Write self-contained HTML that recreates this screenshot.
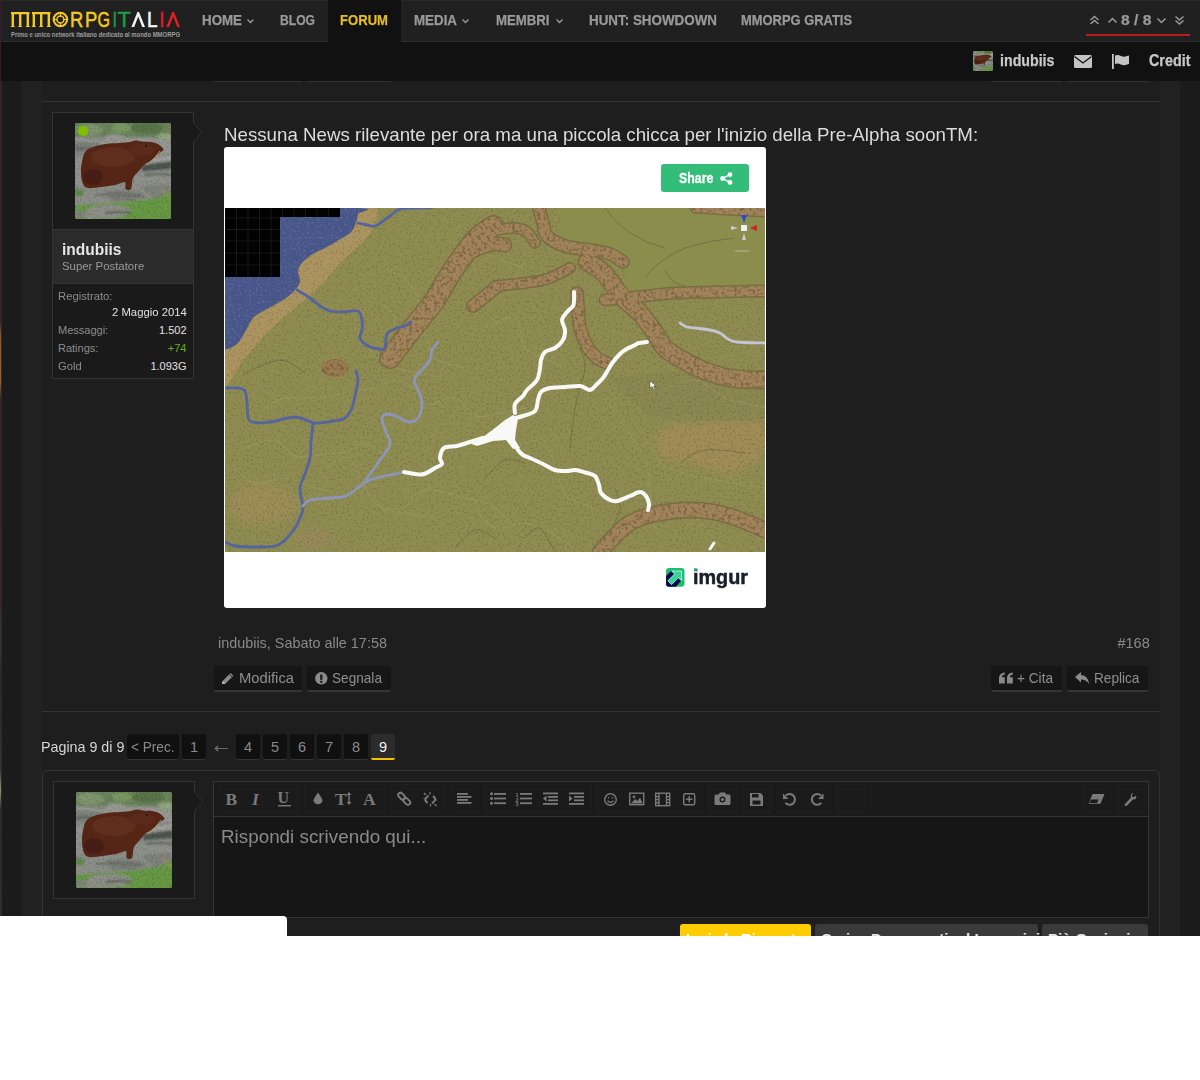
<!DOCTYPE html>
<html><head><meta charset="utf-8">
<style>
*{margin:0;padding:0;box-sizing:border-box}
html,body{width:1200px;height:1080px;background:#fff;overflow:hidden;font-family:"Liberation Sans",sans-serif}
.abs{position:absolute}
#page{position:absolute;left:0;top:0;width:1200px;height:936px;background:#1b1b1b;overflow:hidden}
#edge{left:0;top:0;width:1px;height:936px;background:linear-gradient(#3a1a2c 0,#3a1a2c 320px,#9a5020 335px,#b06024 380px,#3a1e2a 400px,#40202c 600px,#3a3040 640px,#1e2c28 680px,#2a3a2a 770px,#8a9a60 790px,#203028 810px,#283432 936px)}
#edgeline{left:1px;top:81px;width:1px;height:855px;background:#2c2c2c}
.col{background:#212121}
#nav{left:1px;top:0;width:1199px;height:42px;background:#202020;border-top:1px solid #282828;border-bottom:1px solid #2c2c2c}
#sub{left:1px;top:42px;width:1199px;height:39px;background:#111}
.nt{position:absolute;top:12px;font-weight:bold;font-size:14px;color:#9a9a9a;white-space:nowrap;letter-spacing:-0.2px}
.caret{display:inline-block;width:5px;height:5px;border-right:1.5px solid #9a9a9a;border-bottom:1.5px solid #9a9a9a;transform:rotate(45deg);margin-left:5px;position:relative;top:-3px}
#forum{left:328px;top:0;width:73px;height:42px;background:#111}
.hline{background:#333;height:1px}
.box{position:absolute;background:#1a1a1a;border:1px solid #333}
.btn{position:absolute;height:26px;background:#161616;border-radius:2px;border-bottom:2px solid #363636}
.pg{position:absolute;top:734px;height:25px;background:#101010;border-radius:2px;box-shadow:0 1px 0 #333}
.t{position:absolute;line-height:1;white-space:nowrap;transform-origin:0 0}
.nav{top:12.1px;font-size:15.2px;font-weight:bold;color:#9a9a9a;-webkit-text-stroke:0.25px #9a9a9a}
.sb{top:52.5px;font-size:16px;font-weight:bold;color:#c8c8c8;-webkit-text-stroke:0.25px #c8c8c8}
.av{background:radial-gradient(ellipse at 45% 50%,#5a3020 0 35%,transparent 36%),linear-gradient(#6a8a50,#8a9a88 40%,#8a9080 70%,#6a9a40)}
.st{font-size:11px;color:#8c8c8c}
.stv{font-size:11px;color:#e2e2e2;transform-origin:100% 0}
.bt{top:670.5px;font-size:14.8px;color:#8f8f8f}
.pt{top:739.7px;font-size:14.5px;color:#8a8a8a}
</style></head><body>
<div id="page">
  <div class="abs col" style="left:22px;top:81px;width:20px;height:855px"></div>
  <div class="abs" style="left:42px;top:81px;width:1118px;height:855px;background:#1e1e1e"></div>
  <div class="abs col" style="left:1160px;top:81px;width:20px;height:855px"></div>
  <div class="abs" id="edge"></div>
  <div class="abs" id="edgeline"></div>
  <div class="abs hline" style="left:42px;top:101px;width:1118px"></div>

  <!-- user box -->
  <div class="abs" style="left:52px;top:112px;width:142px;height:267px;background:#1a1a1a;border:1px solid #333"></div>
  <div class="abs" style="left:53px;top:229px;width:140px;height:55px;background:#2b2b2b;border-top:1px solid #333;border-bottom:1px solid #333"></div>
  <svg class="abs" style="left:192px;top:122px" width="12" height="22"><path d="M1 1 L10 10.5 L1 20" fill="#1a1a1a" stroke="#333" stroke-width="1"/><rect x="0" y="2" width="1.5" height="17" fill="#1a1a1a"/></svg>
  <div class="abs" id="av1" style="left:75px;top:123px;width:96px;height:96px"><svg width="96" height="96" viewBox="0 0 96 96" style="display:block;border-radius:2px">
    <defs><filter id="bl1"><feGaussianBlur stdDeviation="0.9"/></filter><filter id="bs1"><feGaussianBlur stdDeviation="0.45"/></filter>
    <filter id="nz1" x="0" y="0" width="100%" height="100%"><feTurbulence type="fractalNoise" baseFrequency="0.55" numOctaves="2" seed="6"/><feColorMatrix type="matrix" values="0 0 0 0 0  0 0 0 0 0  0 0 0 0 0  0 0 0 -1.8 1.0"/></filter></defs>
    <rect width="96" height="96" fill="#8a8d87"/>
    <g filter="url(#bl1)">
      <rect x="-4" y="-4" width="104" height="18" fill="#6c855c"/>
      <ellipse cx="14" cy="7" rx="14" ry="6" fill="#7f9670"/>
      <ellipse cx="46" cy="5" rx="10" ry="5" fill="#7a9a62"/>
      <ellipse cx="72" cy="5" rx="16" ry="6" fill="#5a7648"/>
      <ellipse cx="90" cy="14" rx="8" ry="4" fill="#92a682"/>
      <path d="M0 14 L28 18 L32 12 Q42 9 52 15 L72 15 L96 19 L96 30 L0 30 Z" fill="#979a94"/>
      <path d="M0 18 L26 20 L24 30 L0 30 Z" fill="#7d827a"/>
      <path d="M0 30 H96 V64 H0 Z" fill="#8a8d87"/>
      <path d="M64 36 L96 32 V38 L66 42 Z" fill="#9ea19b"/>
      <path d="M66 42 L96 38 V46 L68 49 Z" fill="#50554f"/>
      <path d="M60 50 Q80 46 96 48 V63 Q80 65 58 64 Z" fill="#90938c"/>
      <path d="M0 34 L9 34 L8 62 L0 64 Z" fill="#92958f"/>
      <rect x="-4" y="68" width="104" height="32" fill="#689a44"/>
      <path d="M0 68 Q20 63 50 63 Q72 65 94 64 L90 72 Q62 80 30 80 L0 83 Z" fill="#8e918a"/>
      <path d="M30 68 Q50 66 68 70 L60 78 L36 78 Z" fill="#7c7f78"/>
      <path d="M66 64 Q84 60 96 62 L94 70 L78 76 Z" fill="#80847c"/>
      <path d="M12 86 Q25 80 42 82 Q55 84 57 88 L48 94 L20 96 L10 96 Z" fill="#8f9189"/>
      <path d="M0 88 L12 88 L8 96 L0 96 Z" fill="#80857a"/>
      <path d="M0 26 Q14 24 28 28" stroke="#5c605a" stroke-width="2" fill="none"/>
      <path d="M70 52 Q84 50 96 52" stroke="#5e625c" stroke-width="2" fill="none"/>
      <path d="M20 72 Q45 70 70 74" stroke="#6a6e68" stroke-width="2.2" fill="none"/>
      <path d="M30 90 Q45 88 56 90" stroke="#5a5e58" stroke-width="2" fill="none"/>
      <path d="M0 66 L10 68 L6 74 L0 72 Z" fill="#5f8a48"/>
      <path d="M86 66 Q92 70 96 76" stroke="#b09a58" stroke-width="1.2" fill="none"/>
    </g>
    <rect width="96" height="96" filter="url(#nz1)" opacity="0.25"/>
    <g filter="url(#bs1)">
      <path d="M6 45 C6.3 43.2 7.2 36.8 8 34 C8.8 31.2 9.3 29.7 11 28 C12.7 26.3 14.7 25.2 18 24 C21.3 22.8 26.7 21.7 31 21 C35.3 20.3 40.0 20.3 44 20 C48.0 19.7 52.3 19.4 55 19 C57.7 18.6 57.9 17.6 60 17.5 C62.1 17.4 64.9 18.2 67.5 18.5 C70.1 18.8 73.0 18.6 75.5 19 C78.0 19.4 80.8 20.1 82.7 21 C84.6 21.9 86.0 23.4 87 24.4 C88.0 25.4 88.8 26.1 88.5 27 C88.2 27.9 86.4 28.3 85 29.5 C83.6 30.7 81.6 32.6 80 34 C78.4 35.4 77.3 36.7 75.5 38 C73.7 39.3 70.9 40.3 69 42 C67.1 43.7 65.8 45.8 64 48 C62.2 50.2 59.3 52.0 58 55 C56.7 58.0 57.2 64.2 56 66 C54.8 67.8 51.6 67.2 50.6 66 C49.6 64.8 51.6 59.7 49.8 59 C48.0 58.3 43.9 61.2 40 62 C36.1 62.8 31.1 63.5 26.7 64 C22.2 64.5 16.4 65.5 13.3 65 C10.2 64.5 9.2 63.2 8 61 C6.8 58.8 6.3 53.5 6 52 Z" fill="#542718"/>
      <ellipse cx="38" cy="34" rx="22" ry="10" fill="#5f2e1c"/>
      <ellipse cx="66" cy="27" rx="13" ry="6" fill="#5c2b1a"/>
      <ellipse cx="18" cy="54" rx="10" ry="8" fill="#451f12"/>
      <path d="M85 28 Q80 36 72 42" stroke="#a89868" stroke-width="1" fill="none"/>
      <circle cx="71" cy="23" r="1" fill="#2a1208"/>
    </g>
  </svg></div>
  <div class="abs" style="left:78px;top:126px;width:10px;height:10px;border-radius:50%;background:#7fbf00"></div>
  <div class="t" style="left:62px;top:241.5px;font-size:16px;font-weight:bold;color:#e6e6e6;transform:scaleX(0.969)">indubiis</div>
  <div class="t" style="left:62px;top:260.7px;font-size:11.5px;color:#9a9a9a;transform:scaleX(0.99)">Super Postatore</div>
  <div class="t st" style="left:58px;top:290.5px;transform:scaleX(1.024)">Registrato:</div>
  <div class="t stv" style="right:1013.5px;top:306.9px;transform:scaleX(1.027)">2 Maggio 2014</div>
  <div class="t st" style="left:58px;top:324.6px">Messaggi:</div>
  <div class="t stv" style="right:1013.5px;top:324.6px">1.502</div>
  <div class="t st" style="left:58px;top:343px">Ratings:</div>
  <div class="t stv" style="right:1013.5px;top:343px;color:#66aa22">+74</div>
  <div class="t st" style="left:58px;top:360.8px;transform:scaleX(1.019)">Gold</div>
  <div class="t stv" style="right:1013.5px;top:360.8px">1.093G</div>

  <!-- message -->
  <div class="t" style="left:223.8px;top:126.1px;font-size:18.5px;color:#dcdcdc;transform:scaleX(1.011)">Nessuna News rilevante per ora ma una piccola chicca per l'inizio della Pre-Alpha soonTM:</div>
  <div class="abs" style="left:224px;top:147px;width:542px;height:461px;background:#fff;border-radius:3px"></div>
  <div class="abs" style="left:661px;top:164px;width:88px;height:28px;background:#33bd78;border-radius:3px"></div>
  <div class="t" style="left:679px;top:171px;font-size:14.4px;font-weight:bold;color:#fff;-webkit-text-stroke:0.3px #fff;transform:scaleX(0.858)">Share</div>
  <svg class="abs" style="left:720px;top:172px" width="13" height="13"><g fill="#fff"><circle cx="10" cy="2.6" r="2.4"/><circle cx="2.6" cy="6.5" r="2.4"/><circle cx="10" cy="10.4" r="2.4"/></g><path d="M10 2.6 L2.6 6.5 L10 10.4" stroke="#fff" stroke-width="1.4" fill="none"/></svg>
  <div class="abs" id="map" style="left:225px;top:208px;width:540px;height:344px;background:#8a8a4a;overflow:hidden"><svg width="540" height="344" viewBox="0 0 540 344" style="display:block">
  <defs>
    <filter id="tex" x="0" y="0" width="100%" height="100%">
      <feTurbulence type="fractalNoise" baseFrequency="0.45" numOctaves="2" seed="3" result="n"/>
      <feColorMatrix in="n" type="matrix" values="0 0 0 0 0  0 0 0 0 0  0 0 0 0 0  0 0 0 -9 3.9" result="a"/>
      <feComposite in="SourceGraphic" in2="a" operator="in"/>
    </filter>
    <filter id="rtex" x="-10%" y="-10%" width="120%" height="120%">
      <feTurbulence type="fractalNoise" baseFrequency="0.32" numOctaves="3" seed="9" result="n"/>
      <feColorMatrix in="n" type="matrix" values="0 0 0 0 0  0 0 0 0 0  0 0 0 0 0  0 0 0 -4 2.1" result="a"/>
      <feComposite in="SourceGraphic" in2="a" operator="in"/>
    </filter>
    <filter id="soft"><feGaussianBlur stdDeviation="4"/></filter>
  </defs>
  <defs><clipPath id="wclip"><path d="M0 0 C22.2 0.0 110.8 -1.0 133 0 C155.2 1.0 133.3 3.7 133 6 C132.7 8.3 132.2 11.0 131 14 C129.8 17.0 129.2 20.8 126 24 C122.8 27.2 116.3 30.3 112 33 C107.7 35.7 104.3 37.7 100 40 C95.7 42.3 90.0 44.3 86 47 C82.0 49.7 78.2 53.2 76 56 C73.8 58.8 73.2 61.2 73 64 C72.8 66.8 75.5 70.0 75 73 C74.5 76.0 72.8 78.8 70 82 C67.2 85.2 63.0 88.7 58 92 C53.0 95.3 45.0 99.0 40 102 C35.0 105.0 31.3 106.3 28 110 C24.7 113.7 22.7 119.7 20 124 C17.3 128.3 15.3 133.0 12 136 C8.7 139.0 2.0 141.0 0 142 Z"/></clipPath></defs>
  <rect width="540" height="344" fill="#8e8c51"/>
  <g filter="url(#soft)"><path d="M430 225 L455 215 L540 212 L540 246 L510 268 L470 256 L435 250 Z" fill="#a08c56"/><ellipse cx="38" cy="296" rx="34" ry="22" fill="#9c8c58"/><ellipse cx="90" cy="330" rx="20" ry="10" fill="#98895a"/></g>
  <path d="M385 172 Q420 160 540 168 L540 212 L455 214 L420 205 Z" fill="#898650" opacity="0.7"/>
  <path d="M133 0 C136.2 0.0 149.2 -2.5 152 0 C154.8 2.5 152.0 9.7 150 15 C148.0 20.3 145.3 25.8 140 32 C134.7 38.2 125.5 44.3 118 52 C110.5 59.7 103.0 70.0 95 78 C87.0 86.0 78.3 92.7 70 100 C61.7 107.3 53.3 113.7 45 122 C36.7 130.3 27.5 140.7 20 150 C12.5 159.3 3.3 179.3 0 178 C-3.3 176.7 -2.0 149.0 0 142 C2.0 135.0 8.7 139.0 12 136 C15.3 133.0 17.3 128.3 20 124 C22.7 119.7 24.7 113.7 28 110 C31.3 106.3 35.0 105.0 40 102 C45.0 99.0 53.0 95.3 58 92 C63.0 88.7 67.2 85.2 70 82 C72.8 78.8 74.5 76.0 75 73 C75.5 70.0 72.8 66.8 73 64 C73.2 61.2 73.8 58.8 76 56 C78.2 53.2 82.0 49.7 86 47 C90.0 44.3 95.7 42.3 100 40 C104.3 37.7 107.7 35.7 112 33 C116.3 30.3 122.8 27.2 126 24 C129.2 20.8 129.8 17.0 131 14 C132.2 11.0 132.7 7.3 133 6 Z" fill="#ab9460"/>
  <g fill="none" stroke="#a8a274" stroke-width="0.9" opacity="0.5" stroke-linecap="round">
    <path d="M40 200 C43.3 198.3 51.7 191.7 60 190 C68.3 188.3 80.0 190.8 90 190 C100.0 189.2 110.0 186.7 120 185 C130.0 183.3 140.8 182.2 150 180 C159.2 177.8 166.7 170.3 175 172 C183.3 173.7 195.8 187.0 200 190"/>
    <path d="M20 240 C25.0 238.7 41.7 230.7 50 232 C58.3 233.3 61.7 245.7 70 248 C78.3 250.3 91.7 246.7 100 246 C108.3 245.3 113.3 245.7 120 244 C126.7 242.3 132.5 235.0 140 236 C147.5 237.0 160.8 247.7 165 250"/>
    <path d="M100 260 C104.2 258.7 116.7 246.2 125 252 C133.3 257.8 140.8 286.2 150 295 C159.2 303.8 170.0 302.5 180 305 C190.0 307.5 205.0 309.2 210 310"/>
    <path d="M200 200 C205.0 198.3 221.7 188.7 230 190 C238.3 191.3 242.5 205.5 250 208 C257.5 210.5 266.7 206.3 275 205 C283.3 203.7 295.8 200.8 300 200"/>
    <path d="M290 240 C294.7 238.7 311.3 229.0 318 232 C324.7 235.0 326.0 248.7 330 258 C334.0 267.3 335.3 281.0 342 288 C348.7 295.0 365.3 298.0 370 300"/>
    <path d="M180 300 C183.3 297.0 190.0 283.7 200 282 C210.0 280.3 228.3 287.0 240 290 C251.7 293.0 260.0 293.3 270 300 C280.0 306.7 295.0 325.0 300 330"/>
    <path d="M160 60 C164.7 63.3 181.3 70.3 188 80 C194.7 89.7 196.3 106.3 200 118 C203.7 129.7 203.3 143.0 210 150 C216.7 157.0 235.0 158.3 240 160"/>
    <path d="M130 120 C133.3 124.7 143.3 141.3 150 148 C156.7 154.7 162.5 157.2 170 160 C177.5 162.8 186.7 163.3 195 165 C203.3 166.7 215.8 169.2 220 170"/>
    <path d="M420 230 C423.3 234.7 430.0 251.3 440 258 C450.0 264.7 468.3 267.2 480 270 C491.7 272.8 500.0 273.3 510 275 C520.0 276.7 535.0 279.2 540 280"/>
    <path d="M260 120 C265.0 118.3 283.3 106.7 290 110 C296.7 113.3 295.0 133.3 300 140 C305.0 146.7 313.3 146.7 320 150 C326.7 153.3 336.7 158.3 340 160"/>
    <path d="M10 260 C13.3 262.5 21.7 273.3 30 275 C38.3 276.7 50.8 269.5 60 270 C69.2 270.5 76.7 275.5 85 278 C93.3 280.5 105.8 283.8 110 285"/>
    <path d="M380 190 C383.3 195.0 393.3 210.0 400 220 C406.7 230.0 415.8 239.2 420 250 C424.2 260.8 423.3 273.3 425 285 C426.7 296.7 429.2 314.2 430 320"/>
    <path d="M250 300 C253.3 303.3 261.7 317.5 270 320 C278.3 322.5 290.8 314.2 300 315 C309.2 315.8 316.7 320.8 325 325 C333.3 329.2 345.8 337.5 350 340"/>
    <path d="M440 180 C445.0 178.7 460.0 170.3 470 172 C480.0 173.7 491.7 186.2 500 190 C508.3 193.8 513.3 193.3 520 195 C526.7 196.7 536.7 199.2 540 200"/>
    <path d="M230 20 C233.3 23.3 243.3 35.0 250 40 C256.7 45.0 261.7 46.7 270 50 C278.3 53.3 295.0 58.3 300 60"/>
    <path d="M150 90 C153.3 93.3 168.3 103.3 170 110 C171.7 116.7 161.7 126.7 160 130"/>
    <path d="M460 300 C463.3 303.3 473.3 312.7 480 320 C486.7 327.3 496.7 340.0 500 344"/>
  </g>
  <g fill="none" stroke="#5a5636" stroke-width="0.9" opacity="0.55" stroke-linecap="round">
    <path d="M355 140 C355.8 143.3 360.5 151.7 360 160 C359.5 168.3 354.0 180.8 352 190 C350.0 199.2 349.2 206.7 348 215 C346.8 223.3 345.5 235.8 345 240"/>
    <path d="M260 270 C263.3 267.0 273.3 254.5 280 252 C286.7 249.5 296.7 254.5 300 255"/>
    <path d="M420 70 C422.0 67.0 425.3 57.0 432 52 C438.7 47.0 451.2 43.3 460 40 C468.8 36.7 476.7 33.7 485 32 C493.3 30.3 505.8 30.3 510 30"/>
    <path d="M20 165 C25.8 162.8 45.0 152.0 55 152 C65.0 152.0 75.8 162.8 80 165"/>
    <path d="M390 280 C390.8 283.3 395.3 293.3 395 300 C394.7 306.7 389.7 312.7 388 320 C386.3 327.3 385.5 340.0 385 344"/>
    <path d="M455 255 C459.2 252.8 469.2 243.7 480 242 C490.8 240.3 513.3 244.5 520 245"/>
    <path d="M230 340 C233.3 337.0 243.3 323.7 250 322 C256.7 320.3 266.7 328.7 270 330"/>
    <path d="M440 62 C440.8 64.2 441.7 72.3 445 75 C448.3 77.7 457.5 77.5 460 78"/>
    <path d="M300 330 C302.5 328.3 310.0 317.7 315 320 C320.0 322.3 327.5 340.0 330 344"/>
  </g>
  <rect width="540" height="344" filter="url(#tex)" fill="#4a4428" opacity="0.2"/>
  <path d="M335 0 L336 29 L360 38 L392 45 L398 58 L403 86 L450 83 L540 80 L540 0 Z" fill="#8b8d4d"/>
  <g fill="none" stroke="#5a5636" stroke-width="0.9" opacity="0.55"><path d="M380 0 Q400 30 440 40"/><path d="M420 70 Q432 52 460 40 Q485 32 510 30"/><path d="M440 62 Q445 75 460 78"/></g>
  <path d="M0 0 C22.2 0.0 110.8 -1.0 133 0 C155.2 1.0 133.3 3.7 133 6 C132.7 8.3 132.2 11.0 131 14 C129.8 17.0 129.2 20.8 126 24 C122.8 27.2 116.3 30.3 112 33 C107.7 35.7 104.3 37.7 100 40 C95.7 42.3 90.0 44.3 86 47 C82.0 49.7 78.2 53.2 76 56 C73.8 58.8 73.2 61.2 73 64 C72.8 66.8 75.5 70.0 75 73 C74.5 76.0 72.8 78.8 70 82 C67.2 85.2 63.0 88.7 58 92 C53.0 95.3 45.0 99.0 40 102 C35.0 105.0 31.3 106.3 28 110 C24.7 113.7 22.7 119.7 20 124 C17.3 128.3 15.3 133.0 12 136 C8.7 139.0 2.0 141.0 0 142 Z" fill="#485588"/>
  <rect width="540" height="344" filter="url(#tex)" fill="#8a94c0" opacity="0.25" clip-path="url(#wclip)"/>
  <path d="M0 0 H115 V9 H55 V69 H0 Z" fill="#020202"/>
  <g stroke="#262626" stroke-width="0.6"><path d="M0 10 H55 M0 21.5 H55 M0 33 H55 M0 45 H55 M0 57 H55 M11.5 0 V69 M23 0 V69 M34.5 0 V69 M46 0 V69 M57.5 0 V9 M69 0 V9 M80.5 0 V9 M92 0 V9 M103.5 0 V9"/></g>
  <path d="M55 30 H132" stroke="#7a7f9a" stroke-width="0.6" opacity="0.35"/>
  <g stroke="#6e5a3c" stroke-linecap="round" stroke-linejoin="round" fill="none" opacity="0.6">
    <path d="M268 18 C265.3 20.0 256.7 25.5 252 30 C247.3 34.5 244.0 39.7 240 45 C236.0 50.3 231.3 57.0 228 62 C224.7 67.0 223.0 70.0 220 75 C217.0 80.0 213.3 87.0 210 92 C206.7 97.0 203.7 100.3 200 105 C196.3 109.7 191.7 115.3 188 120 C184.3 124.7 181.8 128.0 178 133 C174.2 138.0 167.2 147.2 165 150" stroke-width="22"/>
    <path d="M236 50 C238.3 48.7 244.7 44.3 250 42 C255.3 39.7 263.0 36.8 268 36 C273.0 35.2 278.0 36.8 280 37" stroke-width="15"/>
    <path d="M270 80 C268.0 81.7 261.7 87.0 258 90 C254.3 93.0 249.7 96.7 248 98" stroke-width="14"/>
    <path d="M270 22 C273.3 21.7 284.7 19.7 290 20 C295.3 20.3 298.7 21.5 302 24 C305.3 26.5 308.7 33.2 310 35" stroke-width="12"/>
    <path d="M314 0 C314.7 2.5 316.7 10.3 318 15 C319.3 19.7 318.3 24.2 322 28 C325.7 31.8 332.8 35.7 340 38 C347.2 40.3 357.5 40.7 365 42 C372.5 43.3 379.5 44.0 385 46 C390.5 48.0 395.8 52.7 398 54" stroke-width="14"/>
    <path d="M362 54 C364.7 55.7 373.3 59.7 378 64 C382.7 68.3 386.3 75.3 390 80 C393.7 84.7 395.8 87.8 400 92 C404.2 96.2 410.3 100.0 415 105 C419.7 110.0 423.8 116.2 428 122 C432.2 127.8 435.0 135.0 440 140 C445.0 145.0 451.7 148.3 458 152 C464.3 155.7 470.2 159.0 478 162 C485.8 165.0 494.7 168.3 505 170 C515.3 171.7 534.2 171.7 540 172" stroke-width="19"/>
    <path d="M380 92 C386.7 91.3 408.3 89.2 420 88 C431.7 86.8 438.3 85.7 450 85 C461.7 84.3 475.0 84.3 490 84 C505.0 83.7 531.7 83.2 540 83" stroke-width="13"/>
    <path d="M270 78 C275.0 77.5 291.3 76.2 300 75 C308.7 73.8 314.5 73.5 322 71 C329.5 68.5 341.2 61.8 345 60" stroke-width="12"/>
    <path d="M352 85 C352.2 87.5 352.5 94.2 353 100 C353.5 105.8 353.5 113.7 355 120 C356.5 126.3 359.2 133.0 362 138 C364.8 143.0 368.7 147.2 372 150 C375.3 152.8 380.3 154.2 382 155" stroke-width="14"/>
    <path d="M375 344 C377.5 341.3 385.0 332.8 390 328 C395.0 323.2 398.3 318.7 405 315 C411.7 311.3 419.2 308.2 430 306 C440.8 303.8 457.5 301.7 470 302 C482.5 302.3 493.3 304.7 505 308 C516.7 311.3 534.2 319.7 540 322" stroke-width="17"/>
    <path d="M470 0 C475.0 0.3 488.3 1.3 500 2 C511.7 2.7 533.3 3.7 540 4" stroke-width="11"/>
  </g>
  <g stroke="#a2845a" stroke-linecap="round" stroke-linejoin="round" fill="none">
    <path d="M268 18 C265.3 20.0 256.7 25.5 252 30 C247.3 34.5 244.0 39.7 240 45 C236.0 50.3 231.3 57.0 228 62 C224.7 67.0 223.0 70.0 220 75 C217.0 80.0 213.3 87.0 210 92 C206.7 97.0 203.7 100.3 200 105 C196.3 109.7 191.7 115.3 188 120 C184.3 124.7 181.8 128.0 178 133 C174.2 138.0 167.2 147.2 165 150" stroke-width="19"/>
    <path d="M236 50 C238.3 48.7 244.7 44.3 250 42 C255.3 39.7 263.0 36.8 268 36 C273.0 35.2 278.0 36.8 280 37" stroke-width="12"/>
    <path d="M270 80 C268.0 81.7 261.7 87.0 258 90 C254.3 93.0 249.7 96.7 248 98" stroke-width="11"/>
    <path d="M270 22 C273.3 21.7 284.7 19.7 290 20 C295.3 20.3 298.7 21.5 302 24 C305.3 26.5 308.7 33.2 310 35" stroke-width="9"/>
    <path d="M314 0 C314.7 2.5 316.7 10.3 318 15 C319.3 19.7 318.3 24.2 322 28 C325.7 31.8 332.8 35.7 340 38 C347.2 40.3 357.5 40.7 365 42 C372.5 43.3 379.5 44.0 385 46 C390.5 48.0 395.8 52.7 398 54" stroke-width="11"/>
    <path d="M362 54 C364.7 55.7 373.3 59.7 378 64 C382.7 68.3 386.3 75.3 390 80 C393.7 84.7 395.8 87.8 400 92 C404.2 96.2 410.3 100.0 415 105 C419.7 110.0 423.8 116.2 428 122 C432.2 127.8 435.0 135.0 440 140 C445.0 145.0 451.7 148.3 458 152 C464.3 155.7 470.2 159.0 478 162 C485.8 165.0 494.7 168.3 505 170 C515.3 171.7 534.2 171.7 540 172" stroke-width="16"/>
    <path d="M380 92 C386.7 91.3 408.3 89.2 420 88 C431.7 86.8 438.3 85.7 450 85 C461.7 84.3 475.0 84.3 490 84 C505.0 83.7 531.7 83.2 540 83" stroke-width="10"/>
    <path d="M270 78 C275.0 77.5 291.3 76.2 300 75 C308.7 73.8 314.5 73.5 322 71 C329.5 68.5 341.2 61.8 345 60" stroke-width="9"/>
    <path d="M352 85 C352.2 87.5 352.5 94.2 353 100 C353.5 105.8 353.5 113.7 355 120 C356.5 126.3 359.2 133.0 362 138 C364.8 143.0 368.7 147.2 372 150 C375.3 152.8 380.3 154.2 382 155" stroke-width="11"/>
    <path d="M375 344 C377.5 341.3 385.0 332.8 390 328 C395.0 323.2 398.3 318.7 405 315 C411.7 311.3 419.2 308.2 430 306 C440.8 303.8 457.5 301.7 470 302 C482.5 302.3 493.3 304.7 505 308 C516.7 311.3 534.2 319.7 540 322" stroke-width="14"/>
    <path d="M470 0 C475.0 0.3 488.3 1.3 500 2 C511.7 2.7 533.3 3.7 540 4" stroke-width="8"/>
  </g>
  <ellipse cx="110" cy="160" rx="14" ry="9" fill="#9a7b50"/>
  <g stroke="#4a3a28" stroke-linecap="round" stroke-linejoin="round" fill="none" filter="url(#rtex)" opacity="0.42">
    <path d="M268 18 C265.3 20.0 256.7 25.5 252 30 C247.3 34.5 244.0 39.7 240 45 C236.0 50.3 231.3 57.0 228 62 C224.7 67.0 223.0 70.0 220 75 C217.0 80.0 213.3 87.0 210 92 C206.7 97.0 203.7 100.3 200 105 C196.3 109.7 191.7 115.3 188 120 C184.3 124.7 181.8 128.0 178 133 C174.2 138.0 167.2 147.2 165 150" stroke-width="19"/>
    <path d="M236 50 C238.3 48.7 244.7 44.3 250 42 C255.3 39.7 263.0 36.8 268 36 C273.0 35.2 278.0 36.8 280 37" stroke-width="12"/>
    <path d="M270 80 C268.0 81.7 261.7 87.0 258 90 C254.3 93.0 249.7 96.7 248 98" stroke-width="11"/>
    <path d="M270 22 C273.3 21.7 284.7 19.7 290 20 C295.3 20.3 298.7 21.5 302 24 C305.3 26.5 308.7 33.2 310 35" stroke-width="9"/>
    <path d="M314 0 C314.7 2.5 316.7 10.3 318 15 C319.3 19.7 318.3 24.2 322 28 C325.7 31.8 332.8 35.7 340 38 C347.2 40.3 357.5 40.7 365 42 C372.5 43.3 379.5 44.0 385 46 C390.5 48.0 395.8 52.7 398 54" stroke-width="11"/>
    <path d="M362 54 C364.7 55.7 373.3 59.7 378 64 C382.7 68.3 386.3 75.3 390 80 C393.7 84.7 395.8 87.8 400 92 C404.2 96.2 410.3 100.0 415 105 C419.7 110.0 423.8 116.2 428 122 C432.2 127.8 435.0 135.0 440 140 C445.0 145.0 451.7 148.3 458 152 C464.3 155.7 470.2 159.0 478 162 C485.8 165.0 494.7 168.3 505 170 C515.3 171.7 534.2 171.7 540 172" stroke-width="16"/>
    <path d="M380 92 C386.7 91.3 408.3 89.2 420 88 C431.7 86.8 438.3 85.7 450 85 C461.7 84.3 475.0 84.3 490 84 C505.0 83.7 531.7 83.2 540 83" stroke-width="10"/>
    <path d="M270 78 C275.0 77.5 291.3 76.2 300 75 C308.7 73.8 314.5 73.5 322 71 C329.5 68.5 341.2 61.8 345 60" stroke-width="9"/>
    <path d="M352 85 C352.2 87.5 352.5 94.2 353 100 C353.5 105.8 353.5 113.7 355 120 C356.5 126.3 359.2 133.0 362 138 C364.8 143.0 368.7 147.2 372 150 C375.3 152.8 380.3 154.2 382 155" stroke-width="11"/>
    <path d="M375 344 C377.5 341.3 385.0 332.8 390 328 C395.0 323.2 398.3 318.7 405 315 C411.7 311.3 419.2 308.2 430 306 C440.8 303.8 457.5 301.7 470 302 C482.5 302.3 493.3 304.7 505 308 C516.7 311.3 534.2 319.7 540 322" stroke-width="14"/>
    <path d="M470 0 C475.0 0.3 488.3 1.3 500 2 C511.7 2.7 533.3 3.7 540 4" stroke-width="8"/>
    <ellipse cx="110" cy="160" rx="14" ry="9" fill="#4a3a28" stroke="none"/>
  </g>
  <g stroke="#5564a0" stroke-linecap="round" stroke-linejoin="round" fill="none" stroke-width="2.8">
    <path d="M72 82 C74.2 83.3 81.2 87.3 85 90 C88.8 92.7 91.7 95.8 95 98 C98.3 100.2 100.8 102.0 105 103 C109.2 104.0 115.3 104.0 120 104 C124.7 104.0 130.2 101.7 133 103 C135.8 104.3 136.3 108.8 137 112 C137.7 115.2 137.3 119.0 137 122 C136.7 125.0 134.0 127.3 135 130 C136.0 132.7 139.7 136.2 143 138 C146.3 139.8 152.2 140.7 155 141 C157.8 141.3 158.8 142.5 160 140 C161.2 137.5 160.0 129.3 162 126 C164.0 122.7 169.0 121.3 172 120 C175.0 118.7 177.7 119.0 180 118 C182.3 117.0 185.0 114.7 186 114"/>
    <path d="M133 15 C134.5 15.3 139.2 16.5 142 17 C144.8 17.5 147.3 18.7 150 18 C152.7 17.3 155.5 14.7 158 13 C160.5 11.3 162.2 10.0 165 8 C167.8 6.0 170.8 2.3 175 1 C179.2 -0.3 185.0 0.2 190 0 C195.0 -0.2 202.5 0.0 205 0"/>
    <path d="M0 180 C2.0 180.0 8.7 179.5 12 180 C15.3 180.5 18.3 180.5 20 183 C21.7 185.5 21.2 190.0 22 195 C22.8 200.0 21.2 209.8 25 213 C28.8 216.2 37.5 214.7 45 214 C52.5 213.3 62.5 208.8 70 209 C77.5 209.2 83.7 214.3 90 215 C96.3 215.7 103.0 213.8 108 213 C113.0 212.2 116.8 212.2 120 210 C123.2 207.8 125.3 203.7 127 200 C128.7 196.3 129.0 192.7 130 188 C131.0 183.3 132.8 176.2 133 172 C133.2 167.8 131.3 164.5 131 163"/>
    <path d="M88 216 C87.7 219.0 86.5 228.3 86 234 C85.5 239.7 86.0 244.7 85 250 C84.0 255.3 81.7 261.0 80 266 C78.3 271.0 75.3 274.3 75 280 C74.7 285.7 78.2 294.7 78 300 C77.8 305.3 75.3 308.7 74 312 C72.7 315.3 72.3 316.7 70 320 C67.7 323.3 63.3 329.0 60 332 C56.7 335.0 55.0 336.8 50 338 C45.0 339.2 36.7 339.0 30 339 C23.3 339.0 15.0 338.8 10 338 C5.0 337.2 1.7 334.7 0 334"/>
  </g>
  <g stroke="#8d95b8" stroke-linecap="round" stroke-linejoin="round" fill="none" stroke-width="2.8">
    <path d="M78 298 C79.2 297.0 80.5 293.3 85 292 C89.5 290.7 99.0 290.7 105 290 C111.0 289.3 116.0 290.0 121 288 C126.0 286.0 131.0 280.7 135 278 C139.0 275.3 140.8 273.7 145 272 C149.2 270.3 154.3 269.3 160 268 C165.7 266.7 175.8 264.7 179 264"/>
    <path d="M141 272 C142.2 270.3 145.7 265.3 148 262 C150.3 258.7 152.2 256.3 155 252 C157.8 247.7 164.0 240.7 165 236 C166.0 231.3 162.3 228.3 161 224 C159.7 219.7 156.7 213.0 157 210 C157.3 207.0 160.3 206.2 163 206 C165.7 205.8 169.7 207.7 173 209 C176.3 210.3 179.7 213.8 183 214 C186.3 214.2 190.7 213.0 193 210 C195.3 207.0 196.8 200.3 197 196 C197.2 191.7 195.3 188.0 194 184 C192.7 180.0 188.8 175.3 189 172 C189.2 168.7 192.3 167.3 195 164 C197.7 160.7 203.0 155.7 205 152 C207.0 148.3 205.7 145.0 207 142 C208.3 139.0 212.0 135.3 213 134"/>
  </g>
  <path d="M455 115 C456.2 115.7 459.5 118.2 462 119 C464.5 119.8 466.2 119.5 470 120 C473.8 120.5 480.8 121.2 485 122 C489.2 122.8 492.0 123.5 495 125 C498.0 126.5 500.2 129.5 503 131 C505.8 132.5 505.8 133.3 512 134 C518.2 134.7 535.3 134.8 540 135" stroke="#c2c6d6" stroke-width="2.8" fill="none" stroke-linecap="round"/>
  <g stroke="#f8f8f6" stroke-linecap="round" stroke-linejoin="round" fill="none" stroke-width="4">
    <path d="M179 264 C180.8 264.3 186.7 265.7 190 266 C193.3 266.3 195.7 267.0 199 266 C202.3 265.0 207.0 261.7 210 260 C213.0 258.3 216.2 257.7 217 256 C217.8 254.3 214.7 252.7 215 250 C215.3 247.3 216.2 242.0 219 240 C221.8 238.0 227.7 239.0 232 238 C236.3 237.0 240.7 235.3 245 234 C249.3 232.7 255.8 230.7 258 230"/>
    <path d="M349 84 C349.0 85.3 349.2 89.7 349 92 C348.8 94.3 349.2 96.0 348 98 C346.8 100.0 343.8 101.7 342 104 C340.2 106.3 337.3 109.0 337 112 C336.7 115.0 339.8 118.7 340 122 C340.2 125.3 339.7 129.0 338 132 C336.3 135.0 333.0 138.0 330 140 C327.0 142.0 322.3 142.0 320 144 C317.7 146.0 316.8 149.3 316 152 C315.2 154.7 315.7 156.7 315 160 C314.3 163.3 314.2 168.3 312 172 C309.8 175.7 304.3 179.3 302 182 C299.7 184.7 300.0 185.7 298 188 C296.0 190.3 291.3 193.2 290 196 C288.7 198.8 290.0 203.5 290 205"/>
    <path d="M422 134 C420.7 134.2 416.0 134.5 414 135 C412.0 135.5 412.3 135.8 410 137 C407.7 138.2 402.5 140.5 400 142 C397.5 143.5 397.0 144.0 395 146 C393.0 148.0 390.0 151.3 388 154 C386.0 156.7 384.7 159.3 383 162 C381.3 164.7 379.8 167.7 378 170 C376.2 172.3 374.2 174.0 372 176 C369.8 178.0 367.8 181.7 365 182 C362.2 182.3 359.2 178.5 355 178 C350.8 177.5 345.0 178.7 340 179 C335.0 179.3 329.0 179.2 325 180 C321.0 180.8 318.0 182.0 316 184 C314.0 186.0 314.0 188.8 313 192 C312.0 195.2 312.5 200.3 310 203 C307.5 205.7 301.3 206.8 298 208 C294.7 209.2 291.3 209.7 290 210"/>
    <path d="M289 234 C289.7 235.3 291.5 239.8 293 242 C294.5 244.2 296.0 245.7 298 247 C300.0 248.3 301.7 248.5 305 250 C308.3 251.5 313.8 254.0 318 256 C322.2 258.0 326.0 260.8 330 262 C334.0 263.2 338.7 263.0 342 263 C345.3 263.0 346.7 261.7 350 262 C353.3 262.3 358.7 264.0 362 265 C365.3 266.0 368.0 266.0 370 268 C372.0 270.0 373.0 274.2 374 277 C375.0 279.8 374.2 282.5 376 285 C377.8 287.5 382.3 290.7 385 292 C387.7 293.3 388.7 293.7 392 293 C395.3 292.3 401.2 289.5 405 288 C408.8 286.5 412.3 284.0 415 284 C417.7 284.0 419.5 286.0 421 288 C422.5 290.0 423.7 293.7 424 296 C424.3 298.3 423.2 301.0 423 302"/>
  </g>
  <path d="M244 235 L258 229 L270 220 L280 212 L288 207 L293 211 L291 222 L290 232 L295 240 L288 241 L281 232 L268 233 L252 238 Z" fill="#f8f8f6"/>
  <path d="M485 341 L489 335" stroke="#f6f6f6" stroke-width="3" stroke-linecap="round"/>
  <path d="M516 7 L522 7 L519 15 Z" fill="#2a4ad8"/>
  <rect x="516" y="17" width="6" height="6" fill="#f0f0f0"/>
  <path d="M525 20 L532 17 L532 23 Z" fill="#d02020"/>
  <path d="M513 20 L506 18 L506 22 Z" fill="#cccccc"/>
  <path d="M519 25 L517 32 L521 32 Z" fill="#cccccc"/>
  <rect x="510" y="42" width="14" height="2" fill="#a8a890" opacity="0.7"/>
  <path d="M425 173 L425 180 L427 178.5 L429 182 L430 181.5 L428.5 178 L431 178 Z" fill="#fff" stroke="#222" stroke-width="0.4"/>
</svg></div>
  <svg class="abs" style="left:666px;top:568px" width="19" height="19"><rect x="0" y="0" width="18.5" height="18.7" rx="3" fill="#1fbd6c"/><path d="M0 8 L5 3 L15 13 L10 18.7 L3 18.7 Q0 18.7 0 15.7 Z" fill="#0e0b4c"/><path d="M15.6 3 V12.6 L12.6 9.6 L5.6 16.6 L1.8 12.8 L8.8 5.8 L5.8 3 Z" fill="#36d49a" stroke="#d8fff0" stroke-width="0.7" stroke-linejoin="round"/></svg>
  <div class="t" style="left:692.7px;top:567.2px;font-size:20px;font-weight:bold;color:#1b1f2a;-webkit-text-stroke:0.5px #1b1f2a;transform:scaleX(0.99)">imgur</div>
  <div class="abs" style="left:693.8px;top:567.8px;width:3.6px;height:3.6px;border-radius:50%;background:#13c487"></div>

  <!-- footer -->
  <div class="t" style="left:218.2px;top:635.7px;font-size:14.3px;color:#8a8a8a;transform:scaleX(1.007)">indubiis, Sabato alle 17:58</div>
  <div class="t" style="right:50.5px;top:635.7px;font-size:14.3px;color:#8a8a8a;transform-origin:100% 0;transform:scaleX(1.018)">#168</div>
  <div class="btn" style="left:214px;top:666px;width:88px"></div>
  <div class="btn" style="left:307px;top:666px;width:84px"></div>
  <div class="btn" style="left:991px;top:666px;width:71px"></div>
  <div class="btn" style="left:1067px;top:666px;width:81px"></div>
  <svg class="abs" style="left:221px;top:672px" width="14" height="13"><path d="M1 12 L1.6 9 L9.6 1 L12.4 3.8 L4.4 11.8 Z" fill="#8a8a8a"/><path d="M8.4 2.2 L11.2 5" stroke="#161616" stroke-width="0.9"/><path d="M1 12 L1.6 9 L4.4 11.8 Z" fill="#bbb"/></svg>
  <div class="t bt" style="left:238.5px;transform:scaleX(0.998)">Modifica</div>
  <svg class="abs" style="left:315px;top:672px" width="13" height="13"><circle cx="6.3" cy="6.3" r="6.2" fill="#8a8a8a"/><rect x="5.2" y="2.6" width="2.2" height="5.2" fill="#161616"/><rect x="5.2" y="8.8" width="2.2" height="2" fill="#161616"/></svg>
  <div class="t bt" style="left:331.5px;transform:scaleX(0.92)">Segnala</div>
  <svg class="abs" style="left:999px;top:672px" width="14" height="12"><path d="M0 6 Q0 1 5.8 0.4 V2.6 Q3 3 2.8 5.2 H5.8 V11.4 H0 Z M8 6 Q8 1 13.8 0.4 V2.6 Q11 3 10.8 5.2 H13.8 V11.4 H8 Z" fill="#8a8a8a"/></svg>
  <div class="t bt" style="left:1017px;transform:scaleX(0.922)">+ Cita</div>
  <svg class="abs" style="left:1075px;top:672px" width="15" height="13"><path d="M0 5 L6 0 V3 Q13 3.5 14.4 12.4 Q11.5 7.5 6 7.4 V10.4 Z" fill="#8a8a8a"/></svg>
  <div class="t bt" style="left:1094px;transform:scaleX(0.92)">Replica</div>
  <div class="abs hline" style="left:42px;top:711px;width:1118px"></div>

  <!-- pagination -->
  <div class="t" style="left:40.5px;top:740.4px;font-size:14.5px;color:#d6d6d6;transform:scaleX(0.985)">Pagina 9 di 9</div>
  <div class="pg" style="left:127px;width:52px"></div>
  <div class="t pt" style="left:131px;transform:scaleX(0.939)">&lt; Prec.</div>
  <div class="pg" style="left:182px;width:24px"></div>
  <div class="t pt" style="left:190px">1</div>
  <div class="abs" style="left:215px;top:747.5px;width:13px;height:1px;background:#666"></div>
  <svg class="abs" style="left:214px;top:745px" width="6" height="8"><path d="M4.2 1 L1.2 3.5 L4.2 6" stroke="#777" stroke-width="1.1" fill="none"/></svg>
  <div class="pg" style="left:236px;width:24px"></div><div class="t pt" style="left:244px">4</div>
  <div class="pg" style="left:263px;width:24px"></div><div class="t pt" style="left:271px">5</div>
  <div class="pg" style="left:290px;width:24px"></div><div class="t pt" style="left:298px">6</div>
  <div class="pg" style="left:317px;width:24px"></div><div class="t pt" style="left:325px">7</div>
  <div class="pg" style="left:344px;width:24px"></div><div class="t pt" style="left:352px">8</div>
  <div class="pg" style="left:371px;width:24px;height:26px;background:#2c2c2c;box-shadow:none;border-bottom:2px solid #f5c400"></div><div class="t pt" style="left:379px;color:#f2f2f2">9</div>

  <!-- reply -->
  <div class="abs" style="left:42px;top:770px;width:1118px;height:200px;border:1px solid #333;border-radius:5px"></div>
  <div class="abs" style="left:53px;top:781px;width:142px;height:118px;background:#1a1a1a;border:1px solid #333"></div>
  <svg class="abs" style="left:193px;top:791px" width="12" height="22"><path d="M1 1 L10 10.5 L1 20" fill="#1a1a1a" stroke="#333" stroke-width="1"/><rect x="0" y="2" width="1.5" height="17" fill="#1a1a1a"/></svg>
  <div class="abs" id="av2" style="left:76px;top:792px;width:96px;height:96px"><svg width="96" height="96" viewBox="0 0 96 96" style="display:block;border-radius:2px">
    <defs><filter id="bl2"><feGaussianBlur stdDeviation="0.9"/></filter><filter id="bs2"><feGaussianBlur stdDeviation="0.45"/></filter>
    <filter id="nz2" x="0" y="0" width="100%" height="100%"><feTurbulence type="fractalNoise" baseFrequency="0.55" numOctaves="2" seed="7"/><feColorMatrix type="matrix" values="0 0 0 0 0  0 0 0 0 0  0 0 0 0 0  0 0 0 -1.8 1.0"/></filter></defs>
    <rect width="96" height="96" fill="#8a8d87"/>
    <g filter="url(#bl2)">
      <rect x="-4" y="-4" width="104" height="18" fill="#6c855c"/>
      <ellipse cx="14" cy="7" rx="14" ry="6" fill="#7f9670"/>
      <ellipse cx="46" cy="5" rx="10" ry="5" fill="#7a9a62"/>
      <ellipse cx="72" cy="5" rx="16" ry="6" fill="#5a7648"/>
      <ellipse cx="90" cy="14" rx="8" ry="4" fill="#92a682"/>
      <path d="M0 14 L28 18 L32 12 Q42 9 52 15 L72 15 L96 19 L96 30 L0 30 Z" fill="#979a94"/>
      <path d="M0 18 L26 20 L24 30 L0 30 Z" fill="#7d827a"/>
      <path d="M0 30 H96 V64 H0 Z" fill="#8a8d87"/>
      <path d="M64 36 L96 32 V38 L66 42 Z" fill="#9ea19b"/>
      <path d="M66 42 L96 38 V46 L68 49 Z" fill="#50554f"/>
      <path d="M60 50 Q80 46 96 48 V63 Q80 65 58 64 Z" fill="#90938c"/>
      <path d="M0 34 L9 34 L8 62 L0 64 Z" fill="#92958f"/>
      <rect x="-4" y="68" width="104" height="32" fill="#689a44"/>
      <path d="M0 68 Q20 63 50 63 Q72 65 94 64 L90 72 Q62 80 30 80 L0 83 Z" fill="#8e918a"/>
      <path d="M30 68 Q50 66 68 70 L60 78 L36 78 Z" fill="#7c7f78"/>
      <path d="M66 64 Q84 60 96 62 L94 70 L78 76 Z" fill="#80847c"/>
      <path d="M12 86 Q25 80 42 82 Q55 84 57 88 L48 94 L20 96 L10 96 Z" fill="#8f9189"/>
      <path d="M0 88 L12 88 L8 96 L0 96 Z" fill="#80857a"/>
      <path d="M0 26 Q14 24 28 28" stroke="#5c605a" stroke-width="2" fill="none"/>
      <path d="M70 52 Q84 50 96 52" stroke="#5e625c" stroke-width="2" fill="none"/>
      <path d="M20 72 Q45 70 70 74" stroke="#6a6e68" stroke-width="2.2" fill="none"/>
      <path d="M30 90 Q45 88 56 90" stroke="#5a5e58" stroke-width="2" fill="none"/>
      <path d="M0 66 L10 68 L6 74 L0 72 Z" fill="#5f8a48"/>
      <path d="M86 66 Q92 70 96 76" stroke="#b09a58" stroke-width="1.2" fill="none"/>
    </g>
    <rect width="96" height="96" filter="url(#nz2)" opacity="0.25"/>
    <g filter="url(#bs2)">
      <path d="M6 45 C6.3 43.2 7.2 36.8 8 34 C8.8 31.2 9.3 29.7 11 28 C12.7 26.3 14.7 25.2 18 24 C21.3 22.8 26.7 21.7 31 21 C35.3 20.3 40.0 20.3 44 20 C48.0 19.7 52.3 19.4 55 19 C57.7 18.6 57.9 17.6 60 17.5 C62.1 17.4 64.9 18.2 67.5 18.5 C70.1 18.8 73.0 18.6 75.5 19 C78.0 19.4 80.8 20.1 82.7 21 C84.6 21.9 86.0 23.4 87 24.4 C88.0 25.4 88.8 26.1 88.5 27 C88.2 27.9 86.4 28.3 85 29.5 C83.6 30.7 81.6 32.6 80 34 C78.4 35.4 77.3 36.7 75.5 38 C73.7 39.3 70.9 40.3 69 42 C67.1 43.7 65.8 45.8 64 48 C62.2 50.2 59.3 52.0 58 55 C56.7 58.0 57.2 64.2 56 66 C54.8 67.8 51.6 67.2 50.6 66 C49.6 64.8 51.6 59.7 49.8 59 C48.0 58.3 43.9 61.2 40 62 C36.1 62.8 31.1 63.5 26.7 64 C22.2 64.5 16.4 65.5 13.3 65 C10.2 64.5 9.2 63.2 8 61 C6.8 58.8 6.3 53.5 6 52 Z" fill="#542718"/>
      <ellipse cx="38" cy="34" rx="22" ry="10" fill="#5f2e1c"/>
      <ellipse cx="66" cy="27" rx="13" ry="6" fill="#5c2b1a"/>
      <ellipse cx="18" cy="54" rx="10" ry="8" fill="#451f12"/>
      <path d="M85 28 Q80 36 72 42" stroke="#a89868" stroke-width="1" fill="none"/>
      <circle cx="71" cy="23" r="1" fill="#2a1208"/>
    </g>
  </svg></div>
  <div class="abs" style="left:213px;top:781px;width:936px;height:137px;background:#161616;border:1px solid #363636"></div>
  <div class="abs" style="left:214px;top:782px;width:934px;height:35px;background:#1a1a1a;border-bottom:1px solid #363636"></div>
<svg class="abs" style="left:213px;top:781px" width="936" height="37" viewBox="213 781 936 37">
  <rect x="218.5" y="784.5" width="80" height="28" fill="#1b1b1b" stroke="#1f1f1f"/><rect x="304.5" y="784.5" width="80" height="28" fill="#1b1b1b" stroke="#1f1f1f"/><rect x="391.5" y="784.5" width="53" height="28" fill="#1b1b1b" stroke="#1f1f1f"/><rect x="450.5" y="784.5" width="28" height="28" fill="#1b1b1b" stroke="#1f1f1f"/><rect x="484.5" y="784.5" width="107" height="28" fill="#1b1b1b" stroke="#1f1f1f"/><rect x="596.5" y="784.5" width="106" height="28" fill="#1b1b1b" stroke="#1f1f1f"/><rect x="708.5" y="784.5" width="29" height="28" fill="#1b1b1b" stroke="#1f1f1f"/><rect x="743.5" y="784.5" width="28" height="28" fill="#1b1b1b" stroke="#1f1f1f"/><rect x="777.5" y="784.5" width="53" height="28" fill="#1b1b1b" stroke="#1f1f1f"/><rect x="836.5" y="784.5" width="28" height="28" fill="#1b1b1b" stroke="#1f1f1f"/><rect x="1083.5" y="784.5" width="27" height="28" fill="#1b1b1b" stroke="#1f1f1f"/><rect x="1117.5" y="784.5" width="27" height="28" fill="#1b1b1b" stroke="#1f1f1f"/>
  <g fill="#7a7a7a" font-family="Liberation Serif" font-weight="bold">
    <text x="225.5" y="805" font-size="17.5">B</text>
    <text x="252" y="805" font-size="17.5" font-style="italic">I</text>
    <text x="277.5" y="803" font-size="16">U</text>
    <rect x="278" y="805" width="13" height="1.4"/>
    <text x="335" y="805" font-size="17.5">T</text>
    <text x="363" y="805" font-size="17.5">A</text>
  </g>
  <g fill="#7a7a7a" stroke="none">
    <path d="M318 792.5 Q314 798 313.5 800.5 A4.6 4.6 0 0 0 322.5 800.5 Q322 798 318 792.5 Z"/>
    <path d="M349 792 L346.5 795 H348.3 V802 H346.5 L349 805 L351.5 802 H349.7 V795 H351.5 Z"/>
  </g>
  <g fill="none" stroke="#7a7a7a" stroke-width="1.9">
    <rect x="-2.3" y="-3.9" width="4.6" height="7.8" rx="2.3" transform="translate(401.6 796.2) rotate(-45)"/>
    <rect x="-2.3" y="-3.9" width="4.6" height="7.8" rx="2.3" transform="translate(406.8 801.4) rotate(-45)"/>
    <path d="M428.5 795.5 L426 798 Q424.5 800 426.5 802 L427.5 803" />
    <path d="M432 803.5 L434.5 801 Q436 799 434 797 L433 796"/>
  </g>
  <g stroke="#7a7a7a" stroke-width="1.2">
    <path d="M424 793 l2 2 M430 792 v2.5 M423.5 798.5 h2.5 M436.5 806 l-2 -2 M430.5 806.5 v-2.5 M437 800 h-2.5"/>
  </g>
  <g fill="#7a7a7a">
    <rect x="457" y="793" width="11" height="1.8"/><rect x="457" y="796" width="14.5" height="1.8"/><rect x="457" y="799" width="11" height="1.8"/><rect x="457" y="802" width="14.5" height="1.8"/>
    <circle cx="491.5" cy="793.8" r="1.5"/><circle cx="491.5" cy="798.5" r="1.5"/><circle cx="491.5" cy="803.2" r="1.5"/>
    <rect x="494" y="793" width="12" height="1.8"/><rect x="494" y="797.6" width="12" height="1.8"/><rect x="494" y="802.3" width="12" height="1.8"/>
    <rect x="520" y="793" width="12" height="1.8"/><rect x="520" y="797.6" width="12" height="1.8"/><rect x="520" y="802.3" width="12" height="1.8"/>
    <text x="515.5" y="797" font-size="5.5" font-family="Liberation Sans" font-weight="bold">1</text>
    <text x="515.5" y="801.5" font-size="5.5" font-family="Liberation Sans" font-weight="bold">2</text>
    <text x="515.5" y="806" font-size="5.5" font-family="Liberation Sans" font-weight="bold">3</text>
    <rect x="543" y="792.5" width="15" height="1.8"/><rect x="548" y="796" width="10" height="1.8"/><rect x="548" y="799.4" width="10" height="1.8"/><rect x="543" y="803" width="15" height="1.8"/>
    <path d="M546.5 795.5 L543 798.5 L546.5 801.5 Z"/>
    <rect x="569" y="792.5" width="15" height="1.8"/><rect x="574" y="796" width="10" height="1.8"/><rect x="574" y="799.4" width="10" height="1.8"/><rect x="569" y="803" width="15" height="1.8"/>
    <path d="M569 795.5 L572.5 798.5 L569 801.5 Z"/>
  </g>
  <g fill="none" stroke="#7a7a7a" stroke-width="1.4">
    <circle cx="610.5" cy="799.5" r="5.8"/>
    <path d="M607.5 800.8 Q610.5 804 613.5 800.8"/>
    <rect x="629.7" y="793.2" width="14" height="11.5"/>
    <rect x="655.7" y="793.2" width="14" height="12.5"/>
    <path d="M659 793 V806 M666.5 793 V806"/>
    <rect x="683.7" y="793.7" width="11" height="11" rx="1.5"/>
    <path d="M689.2 796 V802.5 M686 799.2 H692.5"/>
    <path d="M785.8 795.5 A5.4 5.4 0 1 1 785.4 802.8" stroke-width="2"/>
    <path d="M821 795.5 A5.4 5.4 0 1 0 821.4 802.8" stroke-width="2"/>
  </g>
  <g fill="#7a7a7a">
    <circle cx="610.5" cy="797.8" r="0.8" transform="translate(-2,0)"/><circle cx="612.5" cy="797.8" r="0.8"/>
    <circle cx="634" cy="796.8" r="1.4"/><path d="M631 803.5 L635 799 L637.5 801 L640 797.5 L642.5 803.5 Z"/>
    <g fill="#7a7a7a"><rect x="655.7" y="796" width="3.3" height="1.3"/><rect x="655.7" y="799" width="3.3" height="1.3"/><rect x="655.7" y="802" width="3.3" height="1.3"/><rect x="666.5" y="796" width="3.3" height="1.3"/><rect x="666.5" y="799" width="3.3" height="1.3"/><rect x="666.5" y="802" width="3.3" height="1.3"/></g>
    <path d="M714.5 796 Q714.5 794.5 716 794.5 H718.5 L720 792.5 H725 L726.5 794.5 H729 Q730.5 794.5 730.5 796 V803.5 Q730.5 805 729 805 H716 Q714.5 805 714.5 803.5 Z"/>
    <path d="M750 793 H760.5 L763 795.5 V806 H750 Z"/>
    <path d="M783 793.5 V799 H788.5 Z"/>
    <path d="M823.5 793.5 V799 H818 Z"/>
    <path d="M1092.5 794 H1104.5 L1100.5 803.8 H1088.7 Z"/>
    <path d="M1124.5 804.5 L1131 797.5 Q1129.5 793.5 1133.5 793 L1131.5 795.5 L1133.5 797.5 L1136 795.5 Q1137.5 799.5 1133 799.5 L1126.5 806 Q1125 806.5 1124.5 804.5 Z"/>
  </g>
  <circle cx="722.5" cy="799.5" r="3" fill="#1b1b1b"/>
  <circle cx="722.5" cy="799.5" r="1.6" fill="#7a7a7a"/>
  <rect x="752" y="794" width="6.5" height="3.5" fill="#1b1b1b"/>
  <rect x="752.5" y="800.5" width="8" height="4" fill="#1b1b1b"/>
  <path d="M1089.5 803 H1097 L1098.5 799.5 H1091 Z" fill="#1b1b1b"/>
</svg>
  <div class="t" style="left:221px;top:828.4px;font-size:18.5px;color:#8a8a8a;transform:scaleX(1.018)">Rispondi scrivendo qui...</div>
  <div class="abs" style="left:680px;top:924px;width:131px;height:20px;background:#ffcc00;border-radius:3px"></div>
  <div class="abs" style="left:815px;top:924px;width:223px;height:20px;background:#3a3a3a;border-radius:3px"></div>
  <div class="abs" style="left:1042px;top:924px;width:106px;height:20px;background:#3a3a3a;border-radius:3px"></div>
  <div class="t" style="left:686px;top:931px;font-size:15px;font-weight:bold;color:#fff">Invia la Risposta</div>
  <div class="t" style="left:821px;top:931px;font-size:15px;font-weight:bold;color:#e8e8e8">Carica Documenti ed Immagini</div>
  <div class="t" style="left:1048px;top:931px;font-size:15px;font-weight:bold;color:#e8e8e8">Più Opzioni...</div>
  <div class="abs" style="left:213px;top:81px;width:89px;height:1px;background:#333"></div>
  <div class="abs" style="left:307px;top:81px;width:84px;height:1px;background:#333"></div>
  <div class="abs" style="left:991px;top:81px;width:71px;height:1px;background:#333"></div>
  <div class="abs" style="left:1067px;top:81px;width:81px;height:1px;background:#333"></div>
  <!-- header -->
  <div class="abs" id="nav"></div>
  <div class="abs" id="forum"></div>
  <div class="abs" id="sub"></div>
  <svg class="abs" style="left:0;top:0" width="200" height="42">
    <g fill="#f3c823">
      <path d="M11 12 H29.4 V14.2 H11 Z M11.6 12 H14.0 V25.8 L15.1 27 H10.5 L11.6 25.8 Z M19.0 12 H21.4 V25.8 L22.5 27 H17.9 L19.0 25.8 Z M26.6 12 H29.0 V25.8 L30.1 27 H25.5 L26.6 25.8 Z "/>
      <path d="M32 12 H50.4 V14.2 H32 Z M32.6 12 H35.0 V25.8 L36.1 27 H31.5 L32.6 25.8 Z M40.0 12 H42.4 V25.8 L43.5 27 H38.9 L40.0 25.8 Z M47.6 12 H50.0 V25.8 L51.1 27 H46.5 L47.6 25.8 Z "/>
    </g>
    <g fill="none" stroke="#f3c823">
      <circle cx="60.4" cy="19.5" r="6.7" stroke-width="2.1"/>
      <circle cx="60.4" cy="19.5" r="3.5" stroke-width="1.5"/>
      <path d="M60.4 13 V16.3 M60.4 22.7 V26 M54 19.5 H57.2 M63.6 19.5 H66.8" stroke-width="1.2"/>
    </g>
    <g font-family="Liberation Sans" font-size="21.8" font-weight="normal" stroke-width="0.5">
      <text x="70" y="27" fill="#f3c823" stroke="#f3c823" textLength="13.3" lengthAdjust="spacingAndGlyphs">R</text>
      <text x="85" y="27" fill="#f3c823" stroke="#f3c823" textLength="12.3" lengthAdjust="spacingAndGlyphs">P</text>
      <text x="97.5" y="27" fill="#f3c823" stroke="#f3c823" textLength="12.5" lengthAdjust="spacingAndGlyphs">G</text>
      <text x="112.5" y="27" fill="#1c9b45" stroke="#1c9b45" textLength="4.6" lengthAdjust="spacingAndGlyphs">I</text>
      <text x="117.6" y="27" fill="#1c9b45" stroke="#1c9b45" textLength="13.4" lengthAdjust="spacingAndGlyphs">T</text>
      <text x="147" y="27" fill="#f4f4f4" stroke="#f4f4f4" textLength="10.6" lengthAdjust="spacingAndGlyphs">L</text>
      <text x="159.5" y="27" fill="#e21e26" stroke="#e21e26" textLength="4.8" lengthAdjust="spacingAndGlyphs">I</text>
    </g>
    <path d="M131.4 27 L137.4 12 H139 L145 27 H142.2 L138.2 16.4 L134.2 27 Z" fill="#f4f4f4"/>
    <path d="M166.3 27 L172.3 12 H174 L180 27 H177.2 L173.2 16.4 L169.2 27 Z" fill="#e21e26"/>
    <text x="11" y="37.2" font-family="Liberation Sans" font-weight="bold" font-size="6.4" fill="#9c9c9c" textLength="169" lengthAdjust="spacingAndGlyphs">Primo e unico network italiano dedicato al mondo MMORPG</text>
  </svg>
  <div class="t nav" style="left:202px;transform:scaleX(0.878)">HOME</div>
  <svg class="abs" style="left:246px;top:18px" width="10" height="6"><path d="M1.5 1.5 L4.5 4.5 L7.5 1.5" stroke="#9a9a9a" stroke-width="1.4" fill="none"/></svg>
  <div class="t nav" style="left:280px;transform:scaleX(0.798)">BLOG</div>
  <div class="t nav" style="left:340px;color:#f5c400;transform:scaleX(0.862)">FORUM</div>
  <div class="t nav" style="left:414px;transform:scaleX(0.879)">MEDIA</div>
  <svg class="abs" style="left:461px;top:18px" width="10" height="6"><path d="M1.5 1.5 L4.5 4.5 L7.5 1.5" stroke="#9a9a9a" stroke-width="1.4" fill="none"/></svg>
  <div class="t nav" style="left:496px;transform:scaleX(0.869)">MEMBRI</div>
  <svg class="abs" style="left:555px;top:18px" width="10" height="6"><path d="M1.5 1.5 L4.5 4.5 L7.5 1.5" stroke="#9a9a9a" stroke-width="1.4" fill="none"/></svg>
  <div class="t nav" style="left:589px;transform:scaleX(0.882)">HUNT: SHOWDOWN</div>
  <div class="t nav" style="left:741px;transform:scaleX(0.851)">MMORPG GRATIS</div>
  <!-- thread nav -->
  <svg class="abs" style="left:1088px;top:14px" width="100" height="14">
    <g stroke="#9a9a9a" stroke-width="1.5" fill="none">
      <path d="M2.5 6 L6.5 2.5 L10.5 6 M2.5 10 L6.5 6.5 L10.5 10"/>
      <path d="M20.5 8.5 L24.5 4.5 L28.5 8.5"/>
      <path d="M69.5 4.5 L73.5 8.5 L77.5 4.5"/>
      <path d="M87.5 2.5 L91.5 6 L95.5 2.5 M87.5 6.5 L91.5 10 L95.5 6.5"/>
    </g>
  </svg>
  <div class="t nav" style="left:1121px;transform:scaleX(1.032)">8 / 8</div>
  <div class="abs" style="left:1086px;top:34px;width:104px;height:2px;background:#b81c1c"></div>
  <!-- sub bar right -->
  <div class="abs" style="left:973px;top:51px;width:20px;height:20px"><svg width="20" height="20" viewBox="0 0 96 96" style="display:block;border-radius:2px">
    <defs><filter id="bl3"><feGaussianBlur stdDeviation="0.9"/></filter><filter id="bs3"><feGaussianBlur stdDeviation="0.45"/></filter>
    <filter id="nz3" x="0" y="0" width="100%" height="100%"><feTurbulence type="fractalNoise" baseFrequency="0.55" numOctaves="2" seed="8"/><feColorMatrix type="matrix" values="0 0 0 0 0  0 0 0 0 0  0 0 0 0 0  0 0 0 -1.8 1.0"/></filter></defs>
    <rect width="96" height="96" fill="#8a8d87"/>
    <g filter="url(#bl3)">
      <rect x="-4" y="-4" width="104" height="18" fill="#6c855c"/>
      <ellipse cx="14" cy="7" rx="14" ry="6" fill="#7f9670"/>
      <ellipse cx="46" cy="5" rx="10" ry="5" fill="#7a9a62"/>
      <ellipse cx="72" cy="5" rx="16" ry="6" fill="#5a7648"/>
      <ellipse cx="90" cy="14" rx="8" ry="4" fill="#92a682"/>
      <path d="M0 14 L28 18 L32 12 Q42 9 52 15 L72 15 L96 19 L96 30 L0 30 Z" fill="#979a94"/>
      <path d="M0 18 L26 20 L24 30 L0 30 Z" fill="#7d827a"/>
      <path d="M0 30 H96 V64 H0 Z" fill="#8a8d87"/>
      <path d="M64 36 L96 32 V38 L66 42 Z" fill="#9ea19b"/>
      <path d="M66 42 L96 38 V46 L68 49 Z" fill="#50554f"/>
      <path d="M60 50 Q80 46 96 48 V63 Q80 65 58 64 Z" fill="#90938c"/>
      <path d="M0 34 L9 34 L8 62 L0 64 Z" fill="#92958f"/>
      <rect x="-4" y="68" width="104" height="32" fill="#689a44"/>
      <path d="M0 68 Q20 63 50 63 Q72 65 94 64 L90 72 Q62 80 30 80 L0 83 Z" fill="#8e918a"/>
      <path d="M30 68 Q50 66 68 70 L60 78 L36 78 Z" fill="#7c7f78"/>
      <path d="M66 64 Q84 60 96 62 L94 70 L78 76 Z" fill="#80847c"/>
      <path d="M12 86 Q25 80 42 82 Q55 84 57 88 L48 94 L20 96 L10 96 Z" fill="#8f9189"/>
      <path d="M0 88 L12 88 L8 96 L0 96 Z" fill="#80857a"/>
      <path d="M0 26 Q14 24 28 28" stroke="#5c605a" stroke-width="2" fill="none"/>
      <path d="M70 52 Q84 50 96 52" stroke="#5e625c" stroke-width="2" fill="none"/>
      <path d="M20 72 Q45 70 70 74" stroke="#6a6e68" stroke-width="2.2" fill="none"/>
      <path d="M30 90 Q45 88 56 90" stroke="#5a5e58" stroke-width="2" fill="none"/>
      <path d="M0 66 L10 68 L6 74 L0 72 Z" fill="#5f8a48"/>
      <path d="M86 66 Q92 70 96 76" stroke="#b09a58" stroke-width="1.2" fill="none"/>
    </g>
    <rect width="96" height="96" filter="url(#nz3)" opacity="0.25"/>
    <g filter="url(#bs3)">
      <path d="M6 45 C6.3 43.2 7.2 36.8 8 34 C8.8 31.2 9.3 29.7 11 28 C12.7 26.3 14.7 25.2 18 24 C21.3 22.8 26.7 21.7 31 21 C35.3 20.3 40.0 20.3 44 20 C48.0 19.7 52.3 19.4 55 19 C57.7 18.6 57.9 17.6 60 17.5 C62.1 17.4 64.9 18.2 67.5 18.5 C70.1 18.8 73.0 18.6 75.5 19 C78.0 19.4 80.8 20.1 82.7 21 C84.6 21.9 86.0 23.4 87 24.4 C88.0 25.4 88.8 26.1 88.5 27 C88.2 27.9 86.4 28.3 85 29.5 C83.6 30.7 81.6 32.6 80 34 C78.4 35.4 77.3 36.7 75.5 38 C73.7 39.3 70.9 40.3 69 42 C67.1 43.7 65.8 45.8 64 48 C62.2 50.2 59.3 52.0 58 55 C56.7 58.0 57.2 64.2 56 66 C54.8 67.8 51.6 67.2 50.6 66 C49.6 64.8 51.6 59.7 49.8 59 C48.0 58.3 43.9 61.2 40 62 C36.1 62.8 31.1 63.5 26.7 64 C22.2 64.5 16.4 65.5 13.3 65 C10.2 64.5 9.2 63.2 8 61 C6.8 58.8 6.3 53.5 6 52 Z" fill="#542718"/>
      <ellipse cx="38" cy="34" rx="22" ry="10" fill="#5f2e1c"/>
      <ellipse cx="66" cy="27" rx="13" ry="6" fill="#5c2b1a"/>
      <ellipse cx="18" cy="54" rx="10" ry="8" fill="#451f12"/>
      <path d="M85 28 Q80 36 72 42" stroke="#a89868" stroke-width="1" fill="none"/>
      <circle cx="71" cy="23" r="1" fill="#2a1208"/>
    </g>
  </svg></div>
  <div class="t sb" style="left:1000px;transform:scaleX(0.888)">indubiis</div>
  <svg class="abs" style="left:1074px;top:55px" width="18" height="13"><rect x="0" y="0" width="18" height="13" rx="1.5" fill="#c4c4c4"/><path d="M0.5 1.5 L9 8 L17.5 1.5" stroke="#111" stroke-width="1.3" fill="none"/></svg>
  <svg class="abs" style="left:1112px;top:54px" width="18" height="15"><rect x="0" y="0" width="1.8" height="15" fill="#c4c4c4"/><path d="M3 1.5 Q6 0.5 9 2 Q12 3.5 17 1.5 L17 10 Q12 12 9 10.5 Q6 9 3 10 Z" fill="#c4c4c4"/></svg>
  <div class="t sb" style="left:1149px;transform:scaleX(0.897)">Credit</div>
  <!-- white bottom-left -->
  <div class="abs" style="left:0;top:916px;width:287px;height:30px;background:#fff;border-top-right-radius:4px"></div>
</div>
</body></html>
